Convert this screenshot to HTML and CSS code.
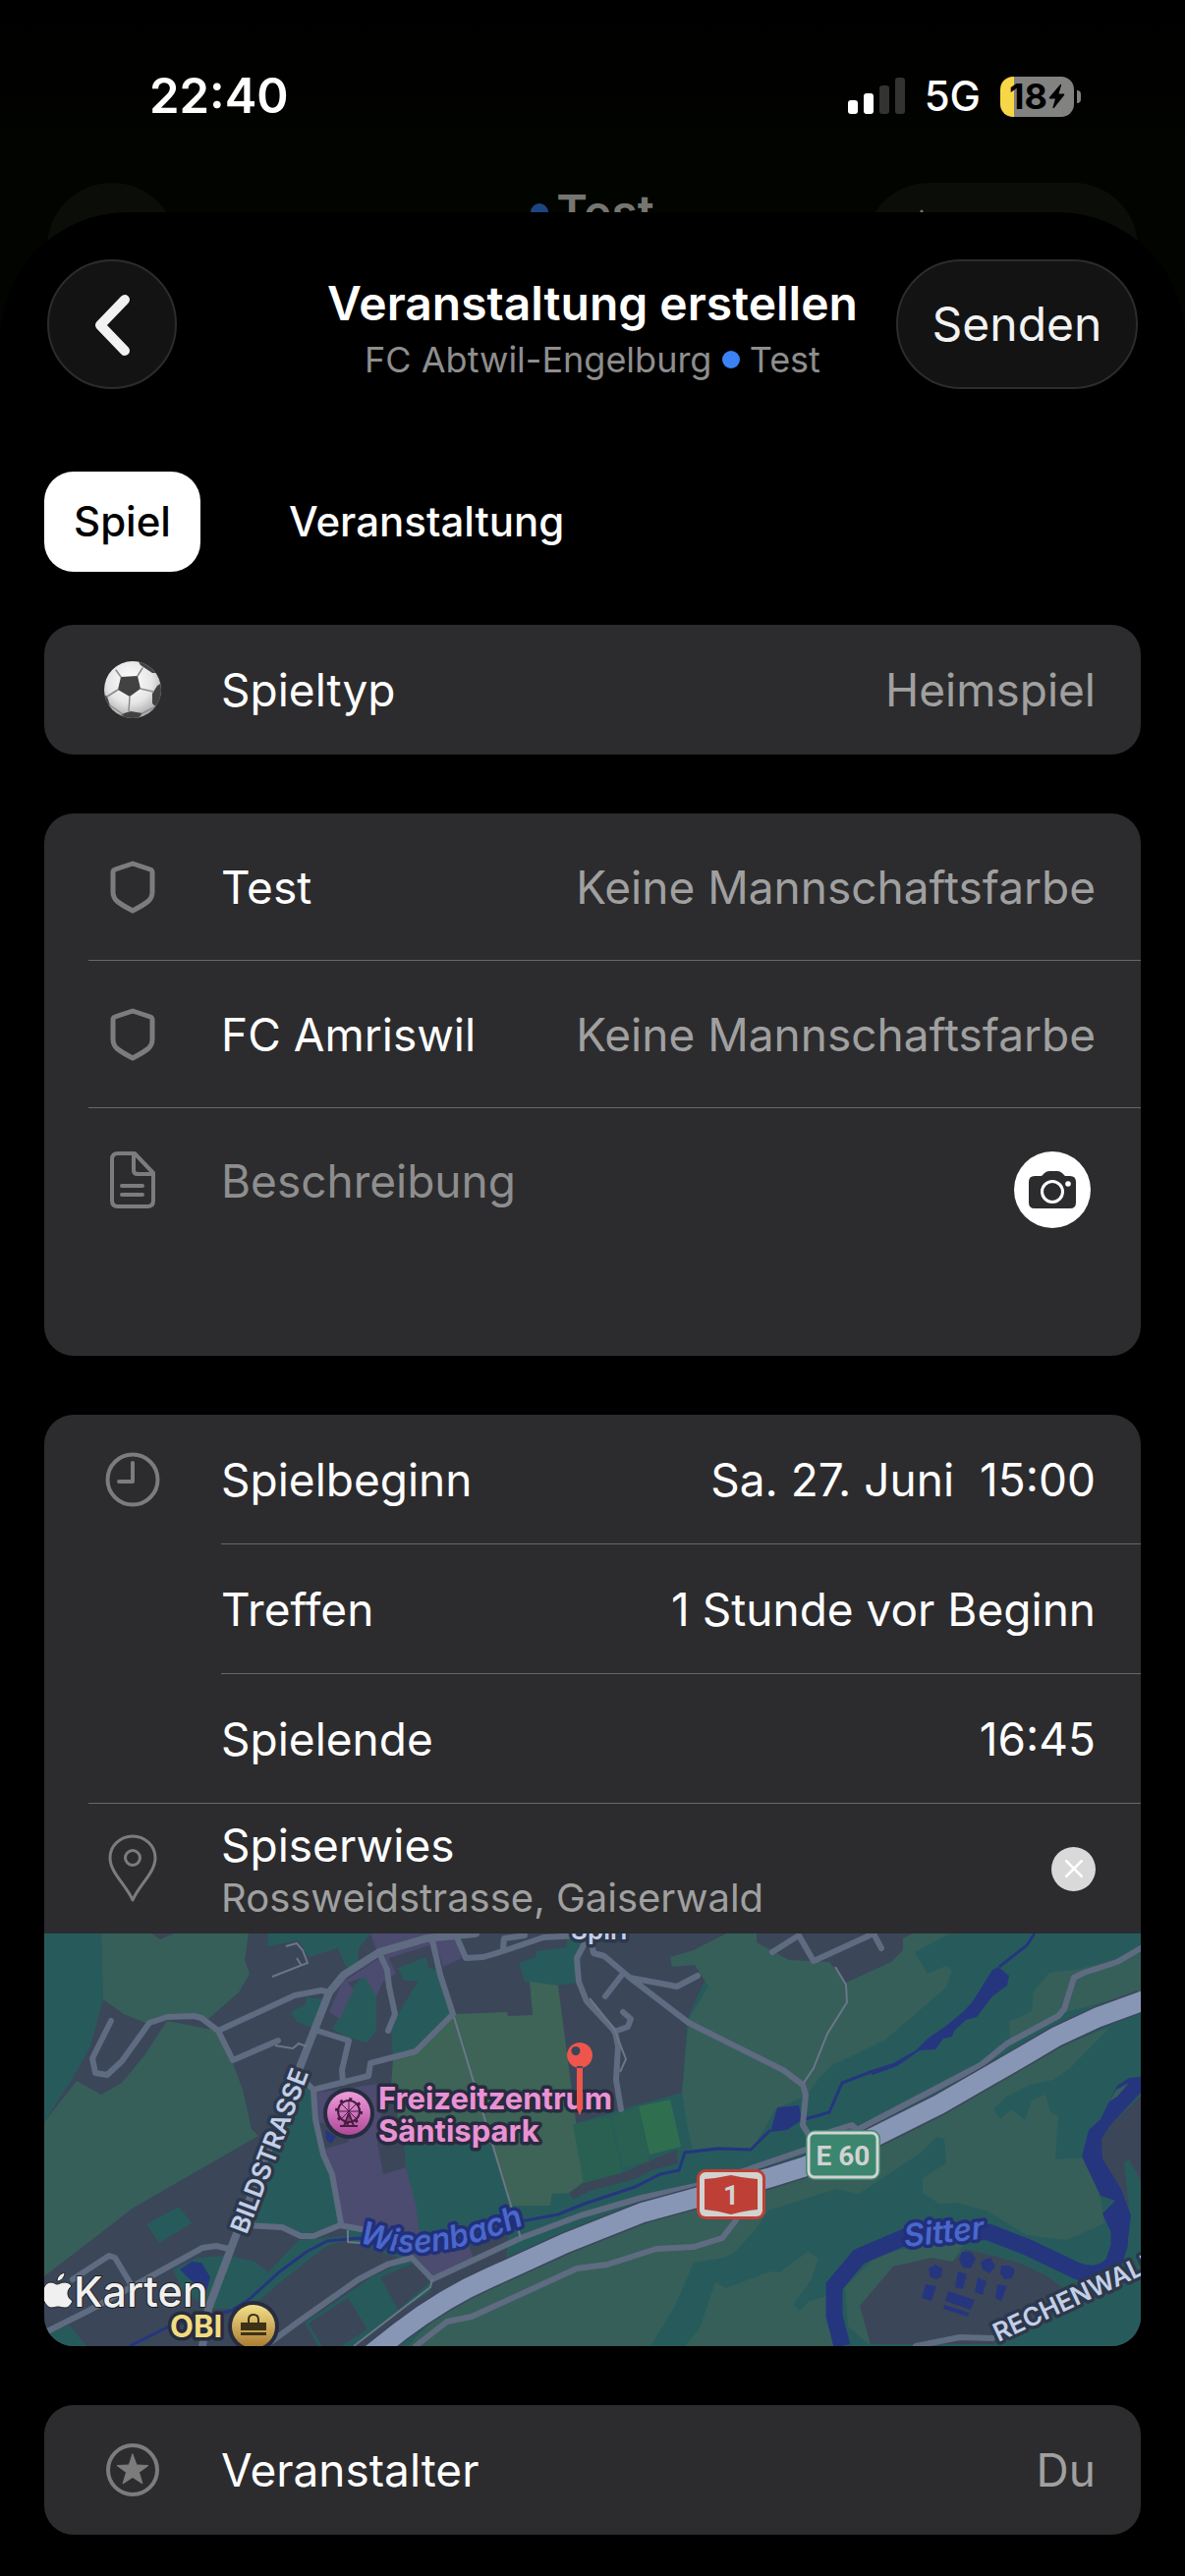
FILE: index.html
```html
<!DOCTYPE html>
<html lang="de">
<head>
  <meta charset="UTF-8" />
  <meta name="viewport" content="width=device-width, initial-scale=1.0" />
  <title>Veranstaltung erstellen</title>
  <link rel="stylesheet" href="styles.css">
</head>
<body>

<div class="status-bar">
  <div class="time">22:40</div>
  <div class="status-icons">
    <svg class="signal" viewBox="0 0 58 38" aria-hidden="true">
      <rect x="0" y="23" width="10" height="14" rx="3" fill="#fff"/>
      <rect x="16" y="16" width="10" height="21" rx="3" fill="#fff"/>
      <rect x="32" y="8" width="10" height="29" rx="3" fill="#333331"/>
      <rect x="48" y="0" width="10" height="37" rx="3" fill="#333331"/>
    </svg>
    <span class="network">5G</span>
    <div class="battery">
      <div class="battery-body">
        <span>18</span>
        <svg viewBox="0 0 17 26" aria-hidden="true"><path d="M12 1 1 14c-.6.8-.3 1.4.6 1.400H7L4.500 24c-.3 1.200.6 1.500 1.400.7L16 12c.6-.8.300-1.400-.6-1.400H10.500L13 2c.3-1-.4-1.500-1-1z" fill="#000"/></svg>
      </div>
      <div class="battery-cap"></div>
    </div>
  </div>
</div>

<!-- Ansicht hinter dem Sheet -->
<div class="backdrop" aria-hidden="true">
  <div class="backdrop-round"></div>
  <div class="backdrop-title"><span class="team-dot"></span>Test</div>
  <div class="backdrop-pill">
    <svg viewBox="0 0 44 44"><path d="M22 2v40M2 22h40" stroke="#757671" stroke-width="3" stroke-linecap="round"/></svg>
  </div>
</div>

<main class="sheet">
  <header class="sheet-header">
    <button class="glass back" aria-label="Zurück">
      <svg viewBox="0 0 40 66" aria-hidden="true"><path d="M33 7 8 33l25 26" fill="none" stroke="#f2f2f2" stroke-width="10" stroke-linecap="round" stroke-linejoin="round"/></svg>
    </button>
    <div class="heading">
      <h1>Veranstaltung erstellen</h1>
      <p>FC Abtwil-Engelburg <span class="team-dot"></span> Test</p>
    </div>
    <button class="glass send">Senden</button>
  </header>

  <nav class="tabs">
    <button class="tab active">Spiel</button>
    <button class="tab">Veranstaltung</button>
  </nav>

  <!-- SPIELTYP -->
  <section class="card">
    <button class="row">
      <span class="icon">
        <svg class="ball" viewBox="0 0 60 60" aria-hidden="true">
          <defs>
            <radialGradient id="leather" cx="45%" cy="35%" r="65%">
              <stop offset="0" stop-color="#fff"/>
              <stop offset=".6" stop-color="#e6e6e6"/>
              <stop offset="1" stop-color="#a9a9a9"/>
            </radialGradient>
            <clipPath id="ball-clip"><circle cx="30" cy="30" r="29"/></clipPath>
          </defs>
          <circle cx="30" cy="30" r="29" fill="url(#leather)"/>
          <g clip-path="url(#ball-clip)">
            <path d="M18 17 35 16 38 29 27 37 15 30z" fill="#424242"/>
            <path d="M35 0 48 4 54 13 50 13 38 5zM60 23 55 26 50 34 50 44 54 48 62 40zM18 55 28 52 40 54 34 61 24 61zM0 34 4 37 7 46 2 46zM4 14 10 9 17 3 8 5z" fill="#424242"/>
            <path d="M18 17 13 10M35 16l5-8M38 29l13 3M27 37l-1 15M15 30 4 37M7 46l13 9M40 54l14-7" fill="none" stroke="#8b8b8b" stroke-width="1.500"/>
          </g>
        </svg>
      </span>
      <span class="label">Spieltyp</span>
      <span class="value muted">Heimspiel</span>
    </button>
  </section>

  <!-- MANNSCHAFTEN -->
  <section class="card">
    <button class="row tall">
      <span class="icon">
        <svg class="shield" viewBox="0 0 46 54" aria-hidden="true"><path d="M23 3 41 9q2 .7 2 3v20c0 8-5 11-20 19C8 43 3 40 3 32V12q0-2.300 2-3z"/></svg>
      </span>
      <span class="label">Test</span>
      <span class="value muted">Keine Mannschaftsfarbe</span>
    </button>
    <hr>
    <button class="row tall">
      <span class="icon">
        <svg class="shield" viewBox="0 0 46 54" aria-hidden="true"><path d="M23 3 41 9q2 .7 2 3v20c0 8-5 11-20 19C8 43 3 40 3 32V12q0-2.300 2-3z"/></svg>
      </span>
      <span class="label">FC Amriswil</span>
      <span class="value muted">Keine Mannschaftsfarbe</span>
    </button>
    <hr>
    <div class="row description">
      <span class="icon">
        <svg class="document" viewBox="0 0 46 58" aria-hidden="true"><path d="M8 2h17l19 20v28q0 6-6 6H8q-6 0-6-6V8q0-6 6-6zM24 2v17q0 4 4 4h16M12 35h21M12 44h21"/></svg>
      </span>
      <textarea aria-label="Beschreibung" placeholder="Beschreibung" rows="3"></textarea>
      <button class="camera" aria-label="Foto hinzufügen">
        <svg viewBox="0 0 48 38" aria-hidden="true">
          <path d="M6 5h7l3-3q2-2 5-2h8q3 0 5 2l3 3h5q6 0 6 6v21q0 6-6 6H6q-6 0-6-6V11q0-6 6-6z" fill="#2c2c2e"/>
          <circle cx="24" cy="21" r="10.500" fill="none" stroke="#fff" stroke-width="3"/>
          <circle cx="40" cy="13" r="2.800" fill="#fff"/>
        </svg>
      </button>
    </div>
  </section>

  <!-- ZEIT UND ORT -->
  <section class="card">
    <button class="row">
      <span class="icon">
        <svg class="clock" viewBox="0 0 56 56" aria-hidden="true"><circle cx="28" cy="28" r="25.500"/><path d="M28 11v19H14"/></svg>
      </span>
      <span class="label">Spielbeginn</span>
      <span class="value date"><span>Sa. 27. Juni</span><span>15:00</span></span>
    </button>
    <hr class="inset">
    <button class="row">
      <span class="icon"></span>
      <span class="label">Treffen</span>
      <span class="value">1 Stunde vor Beginn</span>
    </button>
    <hr class="inset">
    <button class="row">
      <span class="icon"></span>
      <span class="label">Spielende</span>
      <span class="value">16:45</span>
    </button>
    <hr>
    <div class="row">
      <span class="icon">
        <svg class="place" viewBox="0 0 50 70" aria-hidden="true"><path d="M25 67C18 51 2 39 2 24a23 22 0 0 1 46 0c0 15-16 27-23 43z"/><circle cx="25" cy="24" r="7.500"/></svg>
      </span>
      <div class="label">
        <div>Spiserwies</div>
        <div class="address">Rossweidstrasse, Gaiserwald</div>
      </div>
      <button class="clear" aria-label="Ort entfernen">
        <svg viewBox="0 0 18 18" aria-hidden="true"><path d="M1 1l16 16M17 1 1 17" stroke="#fff" stroke-width="2.500" stroke-linecap="round"/></svg>
      </button>
    </div>

    <svg class="map" viewBox="0 0 1116 420" preserveAspectRatio="xMidYMid slice" role="img" aria-label="Karte">
      <defs>
        <linearGradient id="poi-pink" x1="0" y1="0" x2="0" y2="1"><stop offset="0" stop-color="#ee9cdc"/><stop offset="1" stop-color="#b0499a"/></linearGradient>
        <linearGradient id="poi-gold" x1="0" y1="0" x2="0" y2="1"><stop offset="0" stop-color="#f3e189"/><stop offset="1" stop-color="#a97830"/></linearGradient>
        <path id="creek-line" d="M320 313Q385 344 496 293"/>
      </defs>

      <!-- Flächen -->
      <rect width="1116" height="420" fill="#3b4659"/>
      <g fill="#275b5b">
        <path d="M0 0H58L60 67 47 115 29 147 0 192z"/>
        <path d="M228 0H332L320 15 318 35 307 34 299 15 269 24 259 7 227 13z"/>
        <path d="M326 41 338 54V99L328 111 307 105 293 97 300 85 315 54z"/>
        <path d="M389 24 391 35 401 37 416 82 378 120 355 129 353 99 362 79 381 48H366L360 35z"/>
        <path d="M267 65 285 67 277 97 257 90 251 80 266 72z"/>
        <path d="M483 30 500 24 501 18 532 14V2L550 9 541 50 523 53 489 49z"/>
        <path d="M265 149 276 169 280 222 293 245 301 297 263 307 242 299 209 295 232 215z"/>
        <path d="M366 212H456L475 277 480 300 431 318 382 305 368 238z"/>
        <path d="M104 296 137 278 150 295 117 315z"/>
        <path d="M131 342 156 330 186 328 215 334 228 345 259 312 322 307 286 319 240 355 209 382H167L140 362z"/>
        <path d="M303 294 330 291 340 310 378 329 400 318 378 335 345 325 310 312z"/>
        <path d="M265 396 311 365 334 349 378 329 395 352 393 365 360 385 315 420H279z"/>
        <path d="M26 399 43 420H0V405z"/>
        <path d="M538 194 605 174 649 162 655 86 694 0H1116V420H330L400 370 470 330 475 277H515L517 265 549 252z"/>
      </g>
      <path d="M269 397 309 371 329 403 302 420H283zM342 350 380 334 392 355 360 383z" fill="#3b4659"/>
      <g fill="#365f59">
        <path d="M58 0H208L204 27 209 41 198 60 167 87 125 84 103 91 81 82 60 67z"/>
        <path d="M125 89 177 99 192 132 202 159 211 199 218 206 91 279 0 349V192L33 150 58 164 79 152 102 124z"/>
        <path d="M694 0 661 17 637 24 639 34 662 32 676 54 656 87 649 162 655 199 660 220 686 217 721 219 744 179 777 164 787 149 802 134 855 109 918 55 924 37 918 33 899 41 886 19 922 0z"/>
        <path d="M1050 37 1023 40 1007 59 1005 79 982 90 983 112 1040 80 1116 60V20z"/>
        <path d="M1085 95 1044 137 1027 149 1003 154 978 167 966 179 973 189 984 179 998 190 1005 170 1019 164 1024 182 1032 186 1029 230 1061 228 1075 269 1079 295 1040 312 1000 307 959 282 928 274 911 275 894 264V249L918 234 916 209 908 207 891 224 829 265 806 260 737 282 721 305 702 325 692 330 661 335 642 379 617 420H370L408 380 531 320 737 255 841 215 996 130z"/>
        <path d="M683 355 694 361 739 344 748 345 777 324 788 330 781 352 763 377 768 384 779 374 797 369 805 420H652L667 402z"/>
        <path d="M815 360 850 325 938 312 924 336 864 345 835 390 841 420 818 400z"/>
      </g>
      <path d="M416 82 471 80 472 84 497 83 494 49 523 53 549 252 536 264 517 265 515 277H475L456 214H366L353 155 355 129 378 120z" fill="#3d6457"/>
      <g fill="#3b4659">
        <path d="M109 0 118 6 132 0zM725 0V9L758 27 799 29 816 50 862 29 874 17V5L884 0z"/>
        <path d="M534 264 549 254 588 244 615 232 644 220 645 234 621 240 601 250 555 262 539 271z"/>
        <path d="M864 339 903 330 924 334 938 321 992 335 1021 349 1048 369 1020 395 965 418H841L830 379z"/>
        <path d="M1116 165 1085 195 1076 209 1077 229 1096 260 1104 280 1099 234 1104 230 1116 252z"/>
      </g>
      <path d="M538 194 576 187 588 243 549 254zM577 186 605 177 616 232 589 238z" fill="#2a6052"/>
      <path d="M605 176 637 169 648 217 616 225z" fill="#306e50"/>
      <g fill="#4c4b70">
        <path d="M332 0H405V8L351 25 358 41 345 49 338 64 326 44 309 50 315 57 301 87 290 80 303 50 341 25z"/>
        <path d="M397 7 419 4 425 25 406 34z"/>
        <path d="M276 162 347 152 339 212 345 245 368 238 378 275 382 305 431 315 437 330 395 350 378 329 320 299 303 294 293 245 282 222z"/>
      </g>
      <path d="M278 192 308 200 310 212 286 219z" fill="#3b4659"/>

      <!-- Gewässer -->
      <g fill="#25367f">
        <path d="M286 200 297 207 292 214 287 210zM138 342 150 334 160 335 169 350 165 365 148 352z"/>
        <path d="M739 202 746 177 768 175 771 190 756 200z"/>
        <path d="M839 140 864 132 887 119 899 107 918 94 936 79 945 69 965 37 971 34 982 43 980 53 965 64 949 85 938 88 926 99 924 105 915 107 907 118 891 119 868 135 843 144z"/>
        <path d="M1077 285 1090 272 1075 267 1056 227 1063 200 1075 189 1092 155 1104 147 1116 146V162L1085 195 1076 209 1077 229 1096 260 1106 287 1102 320 1088 318 1086 305z"/>
        <path d="M900 341 907 337 914 341 913 349 908 352 902 350zM934 324 943 324 948 331 943 341 935 340 931 332zM956 332 963 330 968 339 962 346 955 342 953 335zM974 338 982 338 988 342 985 351 977 352 973 346z"/>
        <path d="M897 357 908 359 903 374 893 371zM930 344 939 347 935 362 927 360zM950 350 959 354 955 368 947 365zM970 357 980 359 974 374 968 371zM920 364 947 373 943 383 917 374zM916 378 941 386 940 390 915 382z"/>
      </g>
      <path d="M1084 171 1091 159 1104 152 1092 166z" fill="#365f59"/>
      <g class="water">
        <path d="M87 420 127 400 190 384 209 372 240 344 267 324 288 313 320 310 380 325 430 310 485 293 523 286 550 275 601 258 627 245 646 241 652 223 686 219 719 220 739 200"/>
        <path d="M771 190 799 182 812 152 841 141M972 34 1000 12 1008 0"/>
        <path class="river" d="M812 420 804 389V359L829 329 876 309 920 302 961 304 1000 319 1050 343Q1073 352 1088 336L1094 318V295"/>
      </g>

      <!-- Strassen -->
      <g id="roads" class="roads">
        <path class="main-road" d="M161 420 167 382 196 305 259 139 290 60 305 42 341 19 389 5 439 0"/>
        <path d="M68 89 49 127 52 142 64 144 79 130 107 91 125 85 152 84 160 86 177 99 192 129 238 109M177 99 255 63 282 58 290 60"/>
        <path d="M341 20 349 37 351 54 357 82 350 99M395 7 403 42 416 82 378 120 332 132 330 145 274 159 267 152M278 99 310 109 303 139 304 152M274 159 276 189 284 225 293 245 302 295"/>
        <path d="M205 297 242 299 261 308H274L301 297 328 302M3 405 45 384 161 320 175 318 188 321M87 355 72 330 66 328 29 352"/>
        <path d="M225 420 259 395 320 352 349 337 374 330 395 352 485 310 546 287 608 269 663 257 717 240 775 220 829 199 953 134 980 112 1032 84 1038 77 1048 45 1058 40 1092 29 1116 15"/>
        <path d="M783 207 822 195 828 200M378 420 410 395 435 390 542 341 573 337 623 321 661 319 690 310 704 292"/>
        <path d="M420 4 429 25 447 24 470 17 508 4 546 2M467 15 468 5 489 2M550 10 542 25 544 49 552 69 581 100 584 115 582 149 587 179"/>
        <path d="M557 10 559 20 570 23 596 45 656 91 752 139 772 154 775 164 772 195 778 205M596 45 644 54 665 43M588 42 571 64M589 80 597 87 594 95 580 100"/>
        <path d="M741 19 768 2 783 28 840 2M845 2 852 15M887 420 932 411 965 412"/>
      </g>
      <path class="trails" d="M417 85 485 310M805 34 816 52 817 70 797 102 783 137 773 152M232 44 268 30 263 17 257 10 246 13M257 25 262 33M235 114 253 117 259 112 267 115M315 420 393 360 395 352M309 302V314L322 315M555 66 580 97 592 128 586 141"/>
      <path d="M343 420 362 405Q408 370 454 350L531 315 609 284 671 267 737 249 775 237 841 209 911 174 996 125 1030 105 1073 85 1116 69" fill="none" stroke="#3b4659" stroke-width="23"/>
      <path d="M333 428 362 405Q408 370 454 350L531 315 609 284 671 267 737 249 775 237 841 209 911 174 996 125 1030 105 1073 85 1125 66" fill="none" stroke="#8896b6" stroke-width="20"/>

      <!-- Beschriftungen -->
      <text class="street" x="536" y="6">Spiri</text>
      <text class="street" transform="translate(206 307) rotate(-69)">BILDSTRASSE</text>
      <text class="street" transform="translate(971 416) rotate(-25)">RECHENWALD</text>
      <text class="water-name"><textPath href="#creek-line">Wisenbach</textPath></text>
      <text class="water-name" transform="translate(876 319) rotate(-6)">Sitter</text>

      <rect x="664" y="240" width="70" height="51" rx="9" fill="#bd3f35"/>
      <rect x="667" y="243" width="64" height="45" rx="6" fill="#d2d2d0"/>
      <path d="M672 250Q685 249 699 246 713 249 726 250V281Q713 282 699 286 685 282 672 281z" fill="#bd3f35"/>
      <text class="shield-text" x="699" y="276">1</text>
      <rect x="775" y="200" width="76" height="51" rx="9" fill="#3c8670"/>
      <rect x="778" y="203" width="70" height="45" rx="6" fill="none" stroke="#d2d2d0" stroke-width="3"/>
      <text class="shield-text" x="813" y="236">E 60</text>

      <circle cx="310" cy="183" r="26" fill="#272c3f"/>
      <circle cx="310" cy="183" r="22" fill="url(#poi-pink)"/>
      <g fill="none" stroke="#461c42" stroke-width="2">
        <circle cx="310" cy="181" r="11"/>
        <path d="M310 170v22M299 181h22M302 173l16 16M318 173l-16 16" stroke-width="1"/>
        <path d="M310 183 305 196M310 183l5 13M301 196h18"/>
        <circle cx="310" cy="181" r="12.500" stroke-width="3" stroke-dasharray="3 6.800"/>
      </g>
      <text class="poi pink" x="340" y="179">Freizeitzentrum</text>
      <text class="poi pink" x="340" y="212">Säntispark</text>

      <circle cx="213" cy="400" r="26" fill="#272c3f"/>
      <circle cx="213" cy="400" r="22" fill="url(#poi-gold)"/>
      <path d="M200 396h26v8h-26zM200 406h26v3h-26z" fill="#3d3214"/>
      <path d="M208 396v-3q0-5 5-5t5 5v3" fill="none" stroke="#3d3214" stroke-width="2"/>
      <text class="poi gold" x="128" y="411">OBI</text>

      <path d="M542 135h6v43l-3 7-3-7zM545 111a13 13 0 1 0 .1 0zM541 115a4.500 4.500 0 1 1-.1 0z" fill="#ee554d" fill-rule="evenodd"/>

      <path d="M21 345c0 5-4 9-8 9 0-5 4-8 8-9zM13 357c2 0 4-2 8-2 3 0 6 2 7 4-6 4-5 12 1 15-2 4-4 7-8 7-3 0-4-1-7-1s-4 1-7 1c-3 0-7-5-8-9-2-8 1-17 8-17 3 0 4 2 6 2z" fill="#f0f0f0" stroke="#222" stroke-width="1"/>
      <text class="credit" x="30" y="380">Karten</text>
    </svg>
  </section>

  <!-- VERANSTALTER -->
  <section class="card">
    <button class="row">
      <span class="icon">
        <svg class="star" viewBox="0 0 56 56" aria-hidden="true"><circle cx="28" cy="28" r="25" fill="none" stroke="#7c7c7c" stroke-width="4"/><path d="M28 12l4 11 12 .5-9.500 7L38 42l-10-6.500L18 42l3.500-11.500-9.500-7L24 23z" fill="#7c7c7c" stroke="#7c7c7c" stroke-width="1" stroke-linejoin="round"/></svg>
      </span>
      <span class="label">Veranstalter</span>
      <span class="value muted">Du</span>
    </button>
  </section>
</main>

</body>
</html>
```
FILE: styles.css
```css
*, *::before, *::after { box-sizing: border-box; margin: 0; padding: 0; }

:root {
  --bg:       #000000;
  --behind:   #020400;
  --surface:  #2c2c2e;
  --text:     #ffffff;
  --text2:    #a0a0a0;
  --icon:     #7c7c7c;
  --line:     #66686a;
  --blue:     #3b82f6;
  --radius:   30px;
}

body {
  font-family: Inter, "Liberation Sans", sans-serif;
  font-size: 46px;
  line-height: 60px;
  background: var(--behind);
  color: var(--text);
  min-height: 100vh;
  display: flex;
  flex-direction: column;
}

button {
  font: inherit;
  color: inherit;
  background: none;
  border: 0;
  cursor: pointer;
}

/* ── STATUSLEISTE ─────────────────────────── */
.status-bar {
  display: flex;
  justify-content: space-between;
  align-items: center;
  height: 156px;
  padding: 40px 106px 0 152px;
  background: linear-gradient(var(--bg), var(--behind));
}

.time { font-size: 49px; font-weight: 600; }

.status-icons {
  display: flex;
  align-items: center;
  gap: 20px;
}

.signal { width: 58px; height: 38px; }
.network { font-size: 42px; font-weight: 500; }

.battery { display: flex; align-items: center; gap: 3px; }

.battery-body {
  display: flex;
  align-items: center;
  justify-content: center;
  gap: 1px;
  width: 75px;
  height: 41px;
  border-radius: 13px;
  background: linear-gradient(to right, #f7d648 14px, #828280 14px);
  color: #000;
  font-size: 36px;
  font-weight: 700;
}

.battery-body svg { width: 17px; height: 26px; }

.battery-cap {
  width: 4px;
  height: 13px;
  border-radius: 0 6px 6px 0;
  background: #828280;
}

/* ── HINTERGRUND-ANSICHT ──────────────────── */
.backdrop {
  display: grid;
  grid-template-columns: 1fr auto 1fr;
  align-items: start;
  height: 132px;
  margin: 30px 48px -102px;
}

.backdrop-round, .backdrop-pill {
  height: 132px;
  border-radius: 66px;
  background: #0b0d08;
}

.backdrop-round { width: 132px; }

.backdrop-pill {
  width: 278px;
  justify-self: end;
  padding: 24px 36px;
}

.backdrop-pill svg { width: 44px; height: 44px; }

.backdrop-title {
  display: flex;
  align-items: center;
  gap: 8px;
  font-size: 48px;
  font-weight: 600;
  color: #757671;
}

.backdrop-title .team-dot { background: #1c4682; }

/* ── SHEET ────────────────────────────────── */
.sheet {
  position: relative;
  flex: 1;
  padding: 48px 45px 42px;
  border-radius: 130px 130px 0 0;
  background: var(--bg);
}

.sheet-header {
  display: grid;
  grid-template-columns: 1fr auto 1fr;
  align-items: center;
  padding: 0 3px;
}

.glass {
  height: 132px;
  border: 2px solid #2c2c2c;
  border-radius: 66px;
  background: #131313;
  color: #f2f2f2;
}

.back { width: 132px; }
.back svg { width: 40px; height: 66px; vertical-align: middle; }
.send { width: 246px; justify-self: end; font-size: 48px; }

.heading { padding-top: 12px; text-align: center; }
.heading h1 { font-size: 48px; font-weight: 600; line-height: 60px; }
.heading p { font-size: 36px; color: #8e8e8e; line-height: 54px; }

.team-dot {
  display: inline-block;
  width: 18px;
  height: 18px;
  border-radius: 50%;
  background: var(--blue);
}

.heading .team-dot { vertical-align: 4px; }

.tabs {
  display: flex;
  gap: 60px;
  margin: 84px 0 54px;
}

.tab {
  height: 102px;
  padding: 0 30px;
  border-radius: var(--radius);
  font-size: 42px;
  font-weight: 500;
}

.tab.active { background: #fff; color: #000; }

/* ── KARTEN MIT ZEILEN ────────────────────── */
.card {
  overflow: hidden;
  border-radius: var(--radius);
  background: var(--surface);
}

.card + .card { margin-top: 60px; }

.card hr {
  height: 1px;
  margin: -1px 0 0 45px;
  border: 0;
  background: var(--line);
}

.card hr.inset { margin-left: 180px; }

.row {
  display: flex;
  align-items: center;
  width: 100%;
  height: 132px;
  padding-right: 46px;
  text-align: left;
}

.row.tall { height: 150px; }

.icon {
  display: flex;
  justify-content: center;
  flex: 0 0 180px;
}

.icon svg {
  fill: none;
  stroke: var(--icon);
  stroke-width: 4;
  stroke-linejoin: round;
  stroke-linecap: round;
}

.icon .ball { width: 60px; height: 60px; stroke: none; }
.icon .shield { width: 46px; height: 54px; stroke-width: 5; }
.document { width: 46px; height: 58px; }
.clock { width: 56px; height: 56px; }
.icon .place { width: 50px; height: 70px; stroke-width: 3; }
.star { width: 56px; height: 56px; }

.label { flex: 1; }
.value { white-space: nowrap; }
.muted { color: var(--text2); }
.date { display: flex; gap: 26px; }

.address {
  font-size: 40px;
  line-height: 48px;
  color: var(--text2);
}

.row.description {
  align-items: flex-start;
  height: 252px;
  padding-top: 44px;
  padding-right: 51px;
}

.description textarea {
  flex: 1;
  min-width: 0;
  height: 180px;
  border: 0;
  outline: 0;
  resize: none;
  background: none;
  color: inherit;
  font: inherit;
}

.description textarea::placeholder { color: #8e8e8e; opacity: 1; }

.camera {
  display: grid;
  place-items: center;
  width: 78px;
  height: 78px;
  border-radius: 50%;
  background: #fff;
}

.camera svg { width: 48px; height: 38px; }

.clear {
  display: grid;
  place-items: center;
  width: 45px;
  height: 45px;
  border-radius: 50%;
  background: #d9d9d9;
}

.clear svg { width: 18px; height: 18px; }

/* ── KARTE ────────────────────────────────── */
.map { display: block; width: 100%; height: 420px; }

.water path { fill: none; stroke: #25367f; stroke-width: 3; }
.water .river { stroke-width: 17; }

.roads path {
  fill: none;
  stroke: #5f6b80;
  stroke-width: 6;
  stroke-linecap: round;
  stroke-linejoin: round;
}

.roads .main-road { stroke-width: 8; }
.trails { fill: none; stroke: #6b7688; stroke-width: 2; }

.map text { paint-order: stroke; stroke-linejoin: round; }

.street {
  font-size: 26px;
  font-weight: 600;
  fill: #c3cfe8;
  stroke: #2d384b;
  stroke-width: 7;
}

.water-name {
  font-size: 32px;
  font-style: italic;
  font-weight: 600;
  fill: #4a68cc;
  stroke: #22307a;
  stroke-width: 7;
}

.poi {
  font-size: 31px;
  font-weight: 700;
  stroke: #272c3f;
  stroke-width: 7;
}

.pink { fill: #ea92d4; }
.gold { fill: #f2dc80; }

.shield-text {
  font-family: Roboto, "Liberation Sans", sans-serif;
  font-size: 28px;
  font-weight: 700;
  text-anchor: middle;
  fill: #d2d2d0;
}

.credit {
  font-size: 43px;
  font-weight: 500;
  fill: #f0f0f0;
  stroke: #222;
  stroke-width: 2;
}
```
